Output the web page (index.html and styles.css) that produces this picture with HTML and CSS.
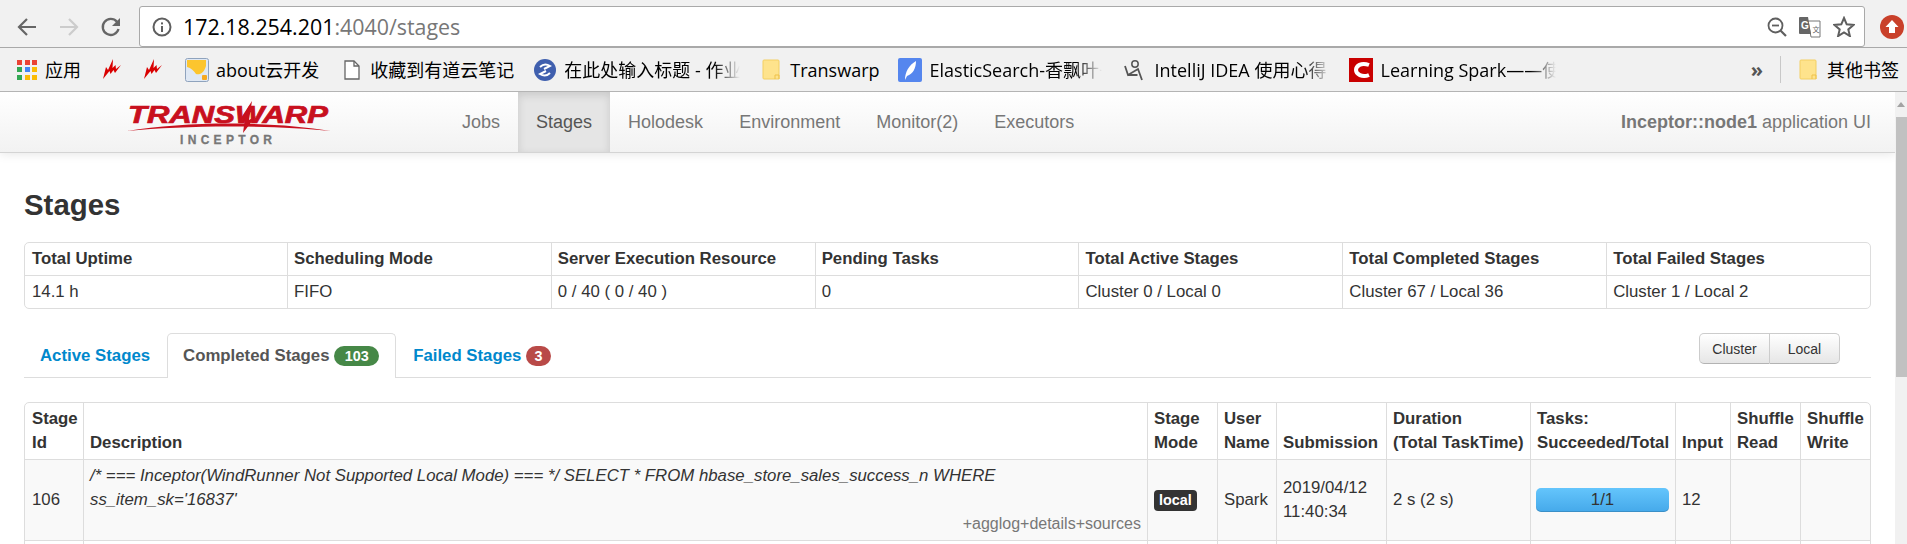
FILE: index.html
```html
<!DOCTYPE html>
<html lang="en">
<head>
    <meta charset="UTF-8">
    <title>Stages</title>
    <link rel="stylesheet" href="styles.css">
</head>
<body>
    <!-- browser toolbar -->
    <div class="toolbar">
        <svg class="tool tool-back" width="20" height="20" viewBox="0 0 20 20"><path d="M19 10H2M10 2l-8 8 8 8" fill="none" stroke="#666" stroke-width="2.2"/></svg>
        <svg class="tool tool-fwd" width="20" height="20" viewBox="0 0 20 20"><path d="M1 10h17M10 2l8 8-8 8" fill="none" stroke="#ccc" stroke-width="2.2"/></svg>
        <svg class="tool tool-reload" width="22" height="22" viewBox="0 0 22 22"><path d="M18.5 13a8 8 0 1 1-1.6-7.2" fill="none" stroke="#666" stroke-width="2.3"/><path d="M20 2v8h-8z" fill="#666"/></svg>
        <div class="omnibox">
            <svg class="info" width="20" height="20" viewBox="0 0 20 20"><circle cx="10" cy="10" r="8.5" fill="none" stroke="#5f5f5f" stroke-width="2"/><rect x="9" y="9" width="2" height="6" fill="#5f5f5f"/><rect x="9" y="5.4" width="2" height="2" fill="#5f5f5f"/></svg>
            <span class="url">172.18.254.201<span class="url-rest">:4040/stages</span></span>
            <svg class="omni-zoom" width="20" height="20" viewBox="0 0 20 20"><circle cx="8.500" cy="8.500" r="7" fill="none" stroke="#5f5f5f" stroke-width="1.800"/><path d="M13.500 13.500L19 19" stroke="#5f5f5f" stroke-width="2.200"/><path d="M5 8.500h7" stroke="#5f5f5f" stroke-width="1.800"/></svg>
            <svg class="omni-translate" width="23" height="22" viewBox="0 0 23 22"><path d="M10 5h12v16H13z" fill="#fff" stroke="#777"/><path d="M1 2a1 1 0 0 1 1-1h8l3 17H2a1 1 0 0 1-1-1z" fill="#666"/><text x="3" y="13" class="translate-g">G</text><text x="14.500" y="16" class="translate-x">文</text></svg>
            <svg class="omni-star" width="22" height="21" viewBox="0 0 22 21"><path d="M11 2l2.700 6.300 6.800.6-5.200 4.500 1.600 6.700L11 16.500l-5.900 3.600 1.600-6.700L1.500 8.900l6.800-.6z" fill="none" stroke="#5f5f5f" stroke-width="2"/></svg>
        </div>
        <svg class="update" width="24" height="24" viewBox="0 0 24 24"><circle cx="12" cy="12" r="12" fill="#c9402a"/><path d="M12 5l6.500 7H15v6H9v-6H5.500z" fill="#fff"/></svg>
    </div>

    <!-- bookmarks bar -->
    <div class="bookmarks">
        <div class="bm">
            <div class="apps">
                <i class="dot-r"></i><i class="dot-r"></i><i class="dot-r"></i>
                <i class="dot-g"></i><i class="dot-b"></i><i class="dot-y"></i>
                <i class="dot-g"></i><i class="dot-y"></i><i class="dot-y"></i>
            </div>
            <span>应用</span>
        </div>
        <div class="bm"><svg width="19" height="21" viewBox="0 0 19 21"><path d="M0 20L3 8l2 3L10 0 9.500 9l3-3 .5 4 5-4-6 8-1.500-3-3 4-1-3z" fill="#d90000"/></svg></div>
        <div class="bm"><svg width="19" height="21" viewBox="0 0 19 21"><path d="M0 20L3 8l2 3L10 0 9.500 9l3-3 .5 4 5-4-6 8-1.500-3-3 4-1-3z" fill="#d90000"/></svg></div>
        <div class="bm bm-about">
            <svg width="24" height="24" viewBox="0 0 24 24"><rect x=".5" y=".5" width="23" height="23" rx="2" fill="#dfe8f4" stroke="#8fa3bd"/><path d="M2 2h19v6c-2 7-6 9-10 8-2-3-5-6-9-7z" fill="#fcc52e"/><rect x="17" y="17" width="5" height="5" rx="1" fill="#f6a921"/></svg>
            <span>about云开发</span>
        </div>
        <div class="bm bm-doc">
            <svg width="16" height="20" viewBox="0 0 16 20"><path d="M1 1h9l5 5v13H1z" fill="#fff" stroke="#666" stroke-width="1.300"/><path d="M10 1v5h5" fill="none" stroke="#666" stroke-width="1.300"/></svg>
            <span>收藏到有道云笔记</span>
        </div>
        <div class="bm bm-globe">
            <svg width="22" height="22" viewBox="0 0 22 22"><circle cx="11" cy="11" r="11" fill="#3f5fae"/><path d="M6 8c3-3 7-3 10-1l-6 3M16 14c-3 3-7 3-10 1l6-3" fill="none" stroke="#fff" stroke-width="2"/></svg>
            <span class="fade w-zuoye">在此处输入标题 - 作业</span>
        </div>
        <div class="bm bm-folder">
            <svg width="18" height="21" viewBox="0 0 18 21"><path d="M1 2a1 1 0 0 1 1-1h14a1 1 0 0 1 1 1v18H2a1 1 0 0 1-1-1z" fill="#fee38c" stroke="#f3cf63"/><path d="M13 20v-4h4v4" fill="none" stroke="#eec14a"/></svg>
            <span>Transwarp</span>
        </div>
        <div class="bm bm-feather">
            <svg width="24" height="24" viewBox="0 0 24 24"><rect width="24" height="24" rx="2" fill="#5586ee"/><path d="M7 22c0-8 4-15 11-19 0 7-3 13-9 15z" fill="#fff"/></svg>
            <span class="fade w-elastic">ElasticSearch-香飘叶子</span>
        </div>
        <div class="bm bm-idea">
            <svg width="20" height="22" viewBox="0 0 20 22"><circle cx="11" cy="5" r="3.200" fill="none" stroke="#555" stroke-width="1.500"/><path d="M1 7l3 9 10-6 4 11M3.500 16l10 0" fill="none" stroke="#555" stroke-width="1.800"/></svg>
            <span class="fade w-idea">IntelliJ IDEA 使用心得</span>
        </div>
        <div class="bm bm-red">
            <svg width="24" height="24" viewBox="0 0 24 24"><rect width="24" height="24" fill="#c90000"/><path d="M20 7c-8-3-13 1-13 5s6 8 13 5" fill="none" stroke="#fff" stroke-width="4"/></svg>
            <span class="fade w-spark">Learning Spark——使用</span>
        </div>
        <div class="bm-more">»</div>
        <div class="bm-sep"></div>
        <div class="bm bm-other">
            <svg width="18" height="21" viewBox="0 0 18 21"><path d="M1 2a1 1 0 0 1 1-1h14a1 1 0 0 1 1 1v18H2a1 1 0 0 1-1-1z" fill="#fee38c" stroke="#f3cf63"/><path d="M13 20v-4h4v4" fill="none" stroke="#eec14a"/></svg>
            <span>其他书签</span>
        </div>
    </div>

    <div class="viewport">
        <div class="page">
            <div class="navbar">
                <div class="brand">
                    <svg width="206" height="46" viewBox="0 0 206 46">
                        <path d="M0 31C60 21 145 21 204 31 145 25 60 25 0 31z" fill="#c8101e"/>
                        <text x="1" y="23" class="logo-word" textLength="200" lengthAdjust="spacingAndGlyphs">TRANSWARP</text>
                        <path d="M125 1l-3 19 7-4-13 17 2-15-6 3z" fill="#c8101e"/>
                        <text x="53" y="44" class="logo-sub" textLength="92">INCEPTOR</text>
                    </svg>
                </div>
                <ul class="nav">
                    <li>Jobs</li>
                    <li class="active">Stages</li>
                    <li>Holodesk</li>
                    <li>Environment</li>
                    <li>Monitor(2)</li>
                    <li>Executors</li>
                </ul>
                <p class="app-name"><strong>Inceptor::node1</strong> application UI</p>
            </div>

            <div class="content">
                <h3>Stages</h3>

                <table class="summary">
                    <tr>
                        <th>Total Uptime</th>
                        <th>Scheduling Mode</th>
                        <th>Server Execution Resource</th>
                        <th>Pending Tasks</th>
                        <th>Total Active Stages</th>
                        <th>Total Completed Stages</th>
                        <th>Total Failed Stages</th>
                    </tr>
                    <tr>
                        <td>14.1 h</td>
                        <td>FIFO</td>
                        <td>0 / 40 ( 0 / 40 )</td>
                        <td>0</td>
                        <td>Cluster 0 / Local 0</td>
                        <td>Cluster 67 / Local 36</td>
                        <td>Cluster 1 / Local 2</td>
                    </tr>
                </table>

                <div class="tabs">
                    <a class="tab">Active Stages</a>
                    <a class="tab tab-active">Completed Stages <span class="badge badge-ok">103</span></a>
                    <a class="tab">Failed Stages <span class="badge badge-bad">3</span></a>
                    <div class="btn-group">
                        <button class="btn btn-cluster">Cluster</button>
                        <button class="btn btn-local">Local</button>
                    </div>
                </div>

                <table class="stages">
                    <tr>
                        <th>Stage<br>Id</th>
                        <th>Description</th>
                        <th>Stage<br>Mode</th>
                        <th>User<br>Name</th>
                        <th>Submission</th>
                        <th>Duration<br>(Total TaskTime)</th>
                        <th>Tasks:<br>Succeeded/Total</th>
                        <th>Input</th>
                        <th>Shuffle<br>Read</th>
                        <th>Shuffle<br>Write</th>
                    </tr>
                    <tr class="odd">
                        <td>106</td>
                        <td>
                            <em>/* === Inceptor(WindRunner Not Supported Local Mode) === */ SELECT * FROM hbase_store_sales_success_n WHERE<br>ss_item_sk='16837'</em>
                            <div class="links">+agglog+details+sources</div>
                        </td>
                        <td><span class="label">local</span></td>
                        <td>Spark</td>
                        <td>2019/04/12<br>11:40:34</td>
                        <td>2 s (2 s)</td>
                        <td><div class="progress">1/1</div></td>
                        <td>12</td>
                        <td></td>
                        <td></td>
                    </tr>
                    <tr class="next">
                        <td></td><td></td><td></td><td></td><td></td><td></td><td></td><td></td><td></td><td></td>
                    </tr>
                </table>
            </div>
        </div>

        <div class="scrollbar">
            <div class="scroll-up"></div>
            <div class="scroll-thumb"></div>
        </div>
    </div>
</body>
</html>
```

FILE: styles.css
```css
html, body {
    margin: 0;
    height: 544px;
    overflow: hidden;
    background: #fff;
}

body {
    font-family: "Liberation Sans", Arial, sans-serif;
    font-size: 16.8px;
    line-height: 24px;
    color: #333;
}

/* browser chrome */
.toolbar {
    height: 47px;
    box-sizing: border-box;
    background: #f1f1f1;
    display: flex;
    align-items: center;
    padding: 6px 0 0 17px;
}

.tool-fwd { margin-left: 22px; }
.tool-reload { margin-left: 21px; }

.omnibox {
    margin-left: 17px;
    width: 1726px;
    height: 41px;
    box-sizing: border-box;
    background: #fff;
    border: 1px solid #a9a9a9;
    border-radius: 3px;
    display: flex;
    align-items: center;
    padding-left: 12px;
}

.url {
    margin-left: 11px;
    font-family: "Open Sans", "Noto Sans", sans-serif;
    font-size: 21.400px;
    color: #000;
    flex: 1;
}

.url-rest { color: #777; }

.omni-translate { margin-left: 11px; }
.omni-star { margin: 0 9px 0 12px; }

.translate-g {
    font: bold 10px "Liberation Sans", sans-serif;
    fill: #fff;
}

.translate-x {
    font: 7px "Noto Sans CJK SC", sans-serif;
    fill: #666;
}

.update { margin-left: 15px; }

.bookmarks {
    height: 45px;
    box-sizing: border-box;
    background: #f1f1f1;
    border-top: 1px solid #a9a9a9;
    border-bottom: 1px solid #b4b4b4;
    display: flex;
    align-items: center;
    gap: 22px;
    padding-left: 17px;
    font-family: "Open Sans", "Noto Sans CJK SC", sans-serif;
    font-size: 18px;
    color: #000;
    white-space: nowrap;
}

.bm {
    display: flex;
    align-items: center;
    gap: 8px;
    flex: none;
}

.bm-about { gap: 7px; }
.bm-doc { gap: 10px; margin-left: 3px; }
.bm-globe { margin-left: -2px; }
.bm-folder { gap: 10px; }
.bm-feather { margin-left: -4px; }
.bm-idea { gap: 11px; }
.bm-red { margin-left: -3px; }

.apps {
    width: 20px;
    display: grid;
    grid-template-columns: repeat(3, 5px);
    gap: 2.500px;
}

.apps i { height: 5px; }
.dot-r { background: #ea4335; }
.dot-g { background: #34a853; }
.dot-b { background: #4285f4; }
.dot-y { background: #fbbc05; }

.fade {
    display: block;
    overflow: hidden;
    -webkit-mask-image: linear-gradient(to right, #000 85%, transparent);
    mask-image: linear-gradient(to right, #000 85%, transparent);
}

.w-zuoye { width: 176px; }
.w-elastic { width: 172px; }
.w-idea { width: 175px; }
.w-spark { width: 175px; }

.bm-more {
    margin-left: auto;
    color: #555;
    font-weight: bold;
    font-size: 20px;
    margin-right: -5px;
}

.bm-sep {
    width: 1px;
    height: 27px;
    background: #c8c8c8;
}

.bm-other { gap: 10px; margin-right: 8px; margin-left: -4px; }

/* page area */
.viewport {
    display: flex;
    height: 452px;
}

.page {
    flex: 1;
    min-width: 0;
    overflow: hidden;
}

.scrollbar {
    width: 12px;
    background: #f1f1f1;
    flex: none;
}

.scroll-up {
    height: 25px;
    position: relative;
}

.scroll-up::after {
    content: "";
    display: block;
    width: 0;
    border: 4px solid transparent;
    border-top: 0;
    border-bottom: 5px solid #a3a3a3;
    position: absolute;
    left: 2px;
    top: 10px;
}

.scroll-thumb {
    height: 260px;
    margin-left: 1px;
    background: #c1c1c1;
}

.navbar {
    height: 61px;
    box-sizing: border-box;
    background: linear-gradient(to bottom, #fff, #f2f2f2);
    border-bottom: 1px solid #d4d4d4;
    box-shadow: 0 1px 10px rgba(0, 0, 0, .1);
    display: flex;
    align-items: stretch;
}

.brand {
    width: 317px;
    margin-left: 127px;
    padding-top: 8px;
    box-sizing: border-box;
}

.nav {
    list-style: none;
    margin: 0;
    padding: 0;
    display: flex;
}

.nav li {
    padding: 0 18px;
    line-height: 60px;
    font-size: 18px;
    color: #777;
}

.nav li.active {
    background: #e5e5e5;
    color: #555;
    box-shadow: inset 0 3px 8px rgba(0, 0, 0, .125);
}

.logo-word {
    font: italic 900 23px "Liberation Sans", sans-serif;
    fill: #c8101e;
    stroke: #c8101e;
    stroke-width: .7px;
}

.logo-sub {
    font: bold 12px "Liberation Sans", sans-serif;
    fill: #777;
    stroke: #777;
    stroke-width: .3px;
}

.app-name {
    margin: 0 24px 0 auto;
    line-height: 60px;
    font-size: 18px;
    color: #777;
}

.content { padding: 0 24px; }

h3 {
    margin: 0;
    padding-top: 34px;
    font-size: 29.400px;
    line-height: 36px;
    color: #333;
}

table {
    width: 1847px;
    table-layout: fixed;
    border-collapse: separate;
    border-spacing: 0;
    border: 1px solid #ddd;
    border-radius: 5px;
}

th, td {
    padding: 4px 6px;
    text-align: left;
    border-left: 1px solid #ddd;
    border-top: 1px solid #ddd;
    box-sizing: border-box;
    vertical-align: middle;
}

th {
    vertical-align: bottom;
    font-weight: bold;
    white-space: nowrap;
}

tr:first-child th { border-top: 0; }
th:first-child, td:first-child { border-left: 0; padding-left: 7px; }

.summary {
    margin-top: 19px;
    color: #333;
}

.summary th:first-child { width: 262px; }

.tabs {
    margin-top: 24px;
    height: 45px;
    box-sizing: border-box;
    border-bottom: 1px solid #ddd;
    display: flex;
    align-items: flex-start;
}

.tab {
    height: 44px;
    box-sizing: border-box;
    padding: 10px 16px 0;
    font-weight: bold;
    color: #0088cc;
    border: 1px solid transparent;
    border-bottom: 0;
}

.tab:first-child { padding-left: 15px; }

.tab-active {
    height: 45px;
    padding-left: 15px;
    background: #fff;
    color: #555;
    border-color: #ddd;
    border-radius: 5px 5px 0 0;
}

.badge {
    display: inline-block;
    padding: 0 10.500px;
    height: 20px;
    line-height: 20px;
    border-radius: 10px;
    color: #fff;
    font-size: 14.400px;
}

.badge-ok { background: #468847; }
.badge-bad { background: #b94a48; padding: 0 8.500px; }

.btn-group {
    margin-left: auto;
    margin-right: 31px;
    display: flex;
}

.btn {
    height: 31px;
    box-sizing: border-box;
    background: linear-gradient(to bottom, #fff, #e6e6e6);
    border: 1px solid #ccc;
    border-bottom-color: #b3b3b3;
    color: #333;
    font-family: "Liberation Sans", Arial, sans-serif;
    font-size: 14px;
    padding: 0;
}

.btn-cluster { width: 71px; border-radius: 5px 0 0 5px; }
.btn-local { width: 70px; border-left: 0; border-radius: 0 5px 5px 0; }

.stages { margin-top: 24px; }

.stages th:nth-child(1) { width: 58px; }
.stages th:nth-child(2) { width: 1064px; }
.stages th:nth-child(3) { width: 70px; }
.stages th:nth-child(4) { width: 59px; }
.stages th:nth-child(5) { width: 110px; }
.stages th:nth-child(6) { width: 144px; }
.stages th:nth-child(7) { width: 145px; }
.stages th:nth-child(8) { width: 55px; }
.stages th:nth-child(9) { width: 70px; }

.stages tr.odd td { background: #f9f9f9; }
.stages tr.next td { height: 40px; }

.links {
    text-align: right;
    font-size: 16px;
    color: #777;
}

.label {
    display: inline-block;
    background: #333;
    color: #fff;
    font-weight: bold;
    font-size: 14.400px;
    line-height: 21px;
    height: 21px;
    padding: 0 5px;
    border-radius: 4px;
}

.progress {
    height: 24px;
    line-height: 24px;
    margin-left: -1px;
    text-align: center;
    border-radius: 5px;
    background: linear-gradient(to bottom, #64c5fc, #45a9ea);
    box-shadow: inset 0 -1px 0 rgba(0, 0, 0, .15);
    color: #333;
}
```
